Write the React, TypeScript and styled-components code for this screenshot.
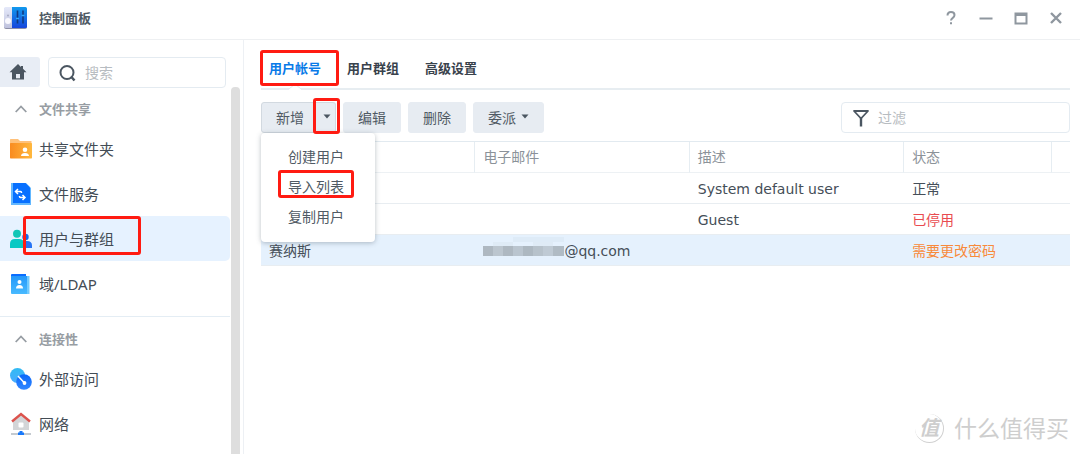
import React from 'react';
import styled, { createGlobalStyle, css } from 'styled-components';

const GlobalStyle = createGlobalStyle`
  * { box-sizing: border-box; }
  body {
    margin: 0;
    background: #fff;
    color: #414b55;
    font-family: "Noto Sans", "Noto Sans CJK SC", sans-serif;
    font-size: 14px;
    overflow: hidden;
  }
  button, input { font: inherit; color: inherit; }
`;

const Window = styled.div`
  position: relative;
  display: flex;
  flex-direction: column;
  height: 100vh;
`;

const TitleBar = styled.header`
  display: flex;
  align-items: center;
  flex: none;
  height: 40px;
  padding: 0 16px 3px 3px;
  border-bottom: 1px solid #eef0f2;
`;

const Title = styled.h1`
  flex: 1;
  margin: 0 0 0 11px;
  font-size: 13px;
  line-height: 20px;
  font-weight: 700;
  color: #505b65;
`;

const WindowButtons = styled.div`
  display: flex;
  gap: 19px;
`;

const WindowButton = styled.button`
  display: flex;
  padding: 0;
  border: 0;
  background: none;
  color: #8f979f;
`;

const Body = styled.div`
  display: flex;
  flex: 1;
  min-height: 0;
`;

const Sidebar = styled.aside`
  display: flex;
  flex-direction: column;
  flex: none;
  width: 244px;
  padding-top: 17px;
  border-right: 1px solid #edf0f4;
`;

const SidebarTop = styled.div`
  display: flex;
  gap: 8px;
  padding-right: 17px;
`;

const HomeButton = styled.button`
  display: flex;
  align-items: center;
  justify-content: center;
  width: 40px;
  height: 30px;
  padding: 0 4px 0 0;
  border: 0;
  border-radius: 0 3px 3px 0;
  background: #e8edf5;
`;

const Field = styled.label<{ $width?: number }>`
  display: flex;
  align-items: center;
  gap: 8px;
  height: 31px;
  padding: 0 10px;
  border: 1px solid #e4ebf1;
  border-radius: 4px;
  ${(p) => (p.$width ? css`width: ${p.$width}px;` : css`flex: 1; min-width: 0;`)}

  svg { flex: none; }
`;

const FieldInput = styled.input`
  flex: 1;
  min-width: 0;
  padding: 0;
  border: 0;
  outline: 0;
  background: none;
  &::placeholder { color: #b7bcc1; opacity: 1; }
`;

const NavScroll = styled.div`
  display: flex;
  flex: 1;
  min-height: 0;
  margin-top: -1px;
`;

const Nav = styled.nav`
  flex: 1;
  overflow: hidden;
`;

const Scrollbar = styled.div`
  width: 9px;
  margin: 0 3px 0 1px;
  border-radius: 4px 4px 0 0;
  background: #dedede;
`;

const NavGroup = styled.section`
  & + & {
    margin-top: 10px;
    border-top: 1px solid #e4edf4;
  }
`;

const GroupToggle = styled.button`
  display: flex;
  align-items: center;
  gap: 12px;
  width: 100%;
  height: 39px;
  padding: 4px 0 0 15px;
  border: 0;
  background: none;
  font-size: 13px;
  font-weight: 700;
  color: #979da3;
`;

const NavItem = styled.a<{ $active?: boolean }>`
  position: relative;
  display: flex;
  align-items: center;
  gap: 7px;
  height: 45px;
  padding-left: 10px;
  border-radius: 0 5px 5px 0;
  background: ${(p) => (p.$active ? '#e6f2ff' : 'transparent')};
  color: #434c55;
  font-size: 15px;
  text-decoration: none;
`;

const Main = styled.main`
  flex: 1;
  min-width: 0;
  padding: 10px 10px 0 17px;
`;

const Tabs = styled.div`
  display: flex;
  gap: 26px;
  height: 40px;
  padding-left: 8px;
  border-bottom: 2px solid #e7edf1;
`;

const Tab = styled.button<{ $active?: boolean }>`
  position: relative;
  height: 38px;
  padding: 0 0 3px;
  border: 0;
  background: none;
  font-size: 13px;
  font-weight: 700;
  color: ${(p) => (p.$active ? '#087ae8' : '#39424c')};
`;

const Notch = styled.svg`
  position: absolute;
  bottom: -2px;
  left: 50%;
  margin-left: -6px;
`;

const Toolbar = styled.div`
  display: flex;
  gap: 7px;
  margin: 12px 0 8px;

  ${Field} { margin-left: auto; }
`;

const buttonFace = css`
  height: 31px;
  border: 1px solid #e7ecf2;
  background: #e7ecf2;
  color: #505a64;
`;

const ToolButton = styled.button`
  ${buttonFace}
  display: flex;
  align-items: center;
  gap: 5px;
  padding: 0 14px 2px;
  border-radius: 3px;
`;

const SplitButton = styled.div`
  position: relative;
  display: flex;
`;

const SplitMain = styled.button`
  ${buttonFace}
  width: 53px;
  padding: 0 0 2px 5px;
  border-color: #d2d9e0;
  border-radius: 3px 0 0 3px;
`;

const SplitArrow = styled.button`
  ${buttonFace}
  display: flex;
  align-items: center;
  justify-content: center;
  width: 22px;
  padding: 0 0 2px 4px;
  border-color: #d2d9e0;
  border-left: 0;
  border-radius: 0 3px 3px 0;
`;

const Menu = styled.div`
  position: absolute;
  z-index: 1;
  top: 31px;
  left: 0;
  width: 114px;
  padding: 9px 0 10px;
  border-radius: 4px;
  background: #fff;
  box-shadow: 0 1px 5px rgba(60, 75, 90, 0.35);
`;

const MenuItem = styled.button`
  position: relative;
  display: block;
  width: 100%;
  height: 30px;
  padding: 0 0 2px 27px;
  border: 0;
  background: none;
  text-align: left;
  color: #505a64;
`;

const Mark = styled.span<{ $box: [number, number, number, number] }>`
  position: absolute;
  z-index: 2;
  top: ${(p) => p.$box[0]}px;
  left: ${(p) => p.$box[1]}px;
  width: ${(p) => p.$box[2]}px;
  height: ${(p) => p.$box[3]}px;
  border: 3px solid #ff1b12;
  border-radius: 3px;
  pointer-events: none;
`;

const Table = styled.table`
  width: 100%;
  table-layout: fixed;
  border-collapse: separate;
  border-spacing: 0;
  border-top: 1px solid #e2eaf0;
  font-family: "DejaVu Sans", "Noto Sans CJK SC", sans-serif;
`;

const HeadCell = styled.th`
  height: 31px;
  padding: 0 8px;
  border-right: 1px solid #e6edf2;
  border-bottom: 1px solid #edf1f4;
  font-weight: 400;
  line-height: 20px;
  text-align: left;
  color: #8b9299;
  &:last-child { border-right: 0; }
`;

const Row = styled.tr<{ $selected?: boolean }>`
  background: ${(p) => (p.$selected ? '#e5f1fd' : 'transparent')};
`;

type Tone = 'normal' | 'disabled' | 'warning';
const tones: Record<Tone, string> = { normal: '#454e58', disabled: '#e94b50', warning: '#f88a3b' };

const Cell = styled.td<{ $tone?: Tone }>`
  height: 31px;
  padding: 2px 8px 0;
  border-bottom: 1px solid #e8edf1;
  line-height: 20px;
  white-space: nowrap;
  color: ${(p) => tones[p.$tone ?? 'normal']};
`;

const Email = styled.span`
  display: flex;
  align-items: center;
`;

const Watermark = styled.div`
  position: absolute;
  right: 11px;
  bottom: 9px;
  display: flex;
  align-items: center;
  gap: 10px;
  color: #cecece;
  font-size: 23px;
  line-height: 34px;
  text-shadow: -1px -1px 0 #fff;
`;

const Seal = styled.span`
  display: flex;
  align-items: center;
  justify-content: center;
  width: 29px;
  height: 29px;
  border-right: 1px solid #d0d0d0;
  border-bottom: 1px solid #d0d0d0;
  border-radius: 50%;
  font-size: 20px;
  font-style: italic;
  font-weight: 700;
  text-shadow: none;
`;

const AppIcon = () => (
  <svg width="25" height="24" viewBox="0 0 25 24">
    <defs>
      <linearGradient id="panelBlue" x1="0" y1="0" x2="0" y2="1"><stop stopColor="#1199ed" /><stop offset="1" stopColor="#1746dc" /></linearGradient>
      <linearGradient id="panelGrey" x1="0" y1="0" x2="0" y2="1"><stop stopColor="#e5e9fa" /><stop offset="1" stopColor="#bfc2dd" /></linearGradient>
    </defs>
    <rect x="1" y="2" width="23" height="21" rx="2" fill="#8d8fa7" />
    <path d="M2.500 1H9v21H2.500Q1 22 1 20.500V2.500Q1 1 2.500 1z" fill="url(#panelGrey)" />
    <path d="M9 1h13.500Q24 1 24 2.500v18q0 1.500-1.500 1.500H9z" fill="url(#panelBlue)" />
    <circle cx="5" cy="15" r="3" fill="#f8f8fe" />
    <circle cx="5" cy="9.500" r="1" fill="#a8abc2" />
    <path d="M14.500 4.500v13M20 4.500v13" stroke="#123a80" strokeWidth="1.600" />
    <path d="M13 12.500h3M18.500 9.500h3" stroke="#2fa8fb" strokeWidth="1.600" />
  </svg>
);

const HomeIcon = () => (
  <svg width="18" height="16" viewBox="0 0 18 16">
    <path d="M9 0 0.500 8.200H3V15.500h4V10h4v5.500H15V8.200h2.500L14 4.800V2h-2v1z" fill="#4b5661" />
    <path d="M7 14.300h4v1.200H7z" fill="#4b5661" />
  </svg>
);

const SearchIcon = () => (
  <svg width="18" height="18" viewBox="0 0 18 18" fill="none" stroke="#4b5661" strokeWidth="2">
    <circle cx="8" cy="8.500" r="6.500" /><path d="m12 12.500 3.500 4" strokeWidth="2.500" />
  </svg>
);

const FilterIcon = () => (
  <svg width="18" height="18" viewBox="0 0 18 18" fill="none" stroke="#4b5661">
    <path d="M2 2h14L9 9.500z" strokeWidth="1.800" strokeLinejoin="round" />
    <path d="M9 9v8.500" strokeWidth="2.400" />
  </svg>
);

const Chevron = () => (
  <svg width="12" height="8" viewBox="0 0 12 8" fill="none" stroke="#979da3" strokeWidth="1.800"><path d="m.7 7 5.300-5.500L11.300 7" /></svg>
);

const Caret = () => (
  <svg width="8" height="5" viewBox="0 0 8 5"><path d="M.5.500h7L4 4.500z" fill="#4b5661" /></svg>
);

const ShareIcon = () => (
  <svg width="22" height="22" viewBox="0 0 22 22">
    <defs><linearGradient id="folder"><stop stopColor="#f98b20" /><stop offset="1" stopColor="#ffb83e" /></linearGradient></defs>
    <path d="M0 1.500Q0 1 .7 1H8l2 2h11.500v6H0z" fill="#ffc17a" />
    <rect y="5" width="22" height="15.500" rx=".7" fill="url(#folder)" />
    <circle cx="15" cy="11.800" r="2.300" fill="#fff" /><path d="M11 18q.2-3 4-3t4 3z" fill="#fff" />
  </svg>
);

const FileIcon = () => (
  <svg width="22" height="22" viewBox="0 0 22 22">
    <path d="M1 0h15l5 5v17H1z" fill="#62b7ff" /><path d="M3 0h12.500L20 4.500V20H3z" fill="#0870ff" />
    <path d="M8 6 5.500 8.500 8 11M6 8.500h4.500q1 0 1 1V10M12.500 12l2.500 2.500-2.500 2.500M14.500 14.500H10.500q-1 0-1-1V13" fill="none" stroke="#fff" strokeWidth="1.500" />
  </svg>
);

const UsersIcon = () => (
  <svg width="22" height="20" viewBox="0 0 22 20">
    <circle cx="15.500" cy="8" r="3.200" fill="#176bea" /><path d="M11 19v-4q0-3 4-3h2q5 0 5 4.500V19z" fill="#2674f5" />
    <circle cx="7" cy="4.800" r="4" fill="#13c6b6" /><path d="M0 19v-4q0-5 5-5h4q5 0 5 5v4z" fill="#08c9c4" />
  </svg>
);

const DomainIcon = () => (
  <svg width="22" height="22" viewBox="0 0 22 22">
    <defs><linearGradient id="book" x1="0" y1="0" x2="0" y2="1"><stop stopColor="#2498fa" /><stop offset="1" stopColor="#48baff" /></linearGradient></defs>
    <path d="M1 2Q1 1 2 1h14v3H1z" fill="#0a6dff" /><path d="M1 3h17.500v18H2q-1 0-1-1z" fill="url(#book)" /><path d="M17 3h2.500v18H17z" fill="#71caff" />
    <circle cx="9.500" cy="9" r="2" fill="#fff" /><path d="M6 15.500q0-3.500 3.500-3.500t3.500 3.500z" fill="#fff" />
  </svg>
);

const AccessIcon = () => (
  <svg width="22" height="22" viewBox="0 0 22 22">
    <defs>
      <linearGradient id="sky" x1="0" y1="0" x2="0" y2="1"><stop stopColor="#31bbf3" /><stop offset="1" stopColor="#49aaff" /></linearGradient>
      <linearGradient id="deep" x1="0" y1="0" x2="0" y2="1"><stop stopColor="#0867fa" /><stop offset="1" stopColor="#3488ff" /></linearGradient>
    </defs>
    <circle cx="7.500" cy="7.500" r="7.500" fill="url(#sky)" /><circle cx="14" cy="14" r="7.800" fill="url(#deep)" />
    <path d="m8 8 6 6.500" stroke="#fff" strokeWidth="1.500" /><circle cx="14.500" cy="15" r="1.900" fill="#fff" />
  </svg>
);

const NetworkIcon = () => (
  <svg width="22" height="24" viewBox="0 0 22 24">
    <path d="M3 8.500 11 2l8 6.500V18H3z" fill="#d3d5d7" /><path d="M2 9.500 11 2l9 7.500" fill="none" stroke="#dc534d" strokeWidth="2.300" />
    <rect x="8.500" y="10.500" width="5" height="5" rx="1" fill="#fff" /><path d="M1 22h20" stroke="#c4cad0" strokeWidth="2" />
    <path d="M9.500 19h3v1.500H14V23H8v-2.500h1.500z" fill="#1778fa" />
  </svg>
);

const mosaic = ['#aeb8c1', '#bcc6cf', '#aeb8c1', '#bac5cf', '#adb8c1', '#b7c2cb', '#bfcad4', '#b0bbc4'];
const MaskedName = () => (
  <svg width="81" height="28" viewBox="0 2 81 28">
    <path d="M30 2h51v5H30z" fill="#deebf7" />
    {mosaic.map((c, i) => <rect key={c + i} x={i * 10} y="11" width={i === 7 ? 11 : 10} height="10" fill={c} />)}
    <path d="M10 7h20v4H10zM50 7h20v4H50z" fill="#dfebf6" />
  </svg>
);

const groups = [
  {
    title: '文件共享',
    items: [
      { label: '共享文件夹', icon: <ShareIcon /> },
      { label: '文件服务', icon: <FileIcon /> },
      { label: '用户与群组', icon: <UsersIcon />, active: true },
      { label: '域/LDAP', icon: <DomainIcon /> },
    ],
  },
  {
    title: '连接性',
    items: [
      { label: '外部访问', icon: <AccessIcon /> },
      { label: '网络', icon: <NetworkIcon /> },
    ],
  },
] as { title: string; items: { label: string; icon: React.ReactNode; active?: boolean }[] }[];

const windowIcons: [string, React.ReactNode][] = [
  ['帮助', <path d="M4.500 5.500Q4.500 2 8 2t3.500 3q0 1.700-1.700 2.800Q8 9 8 10.500M8 12.300v2" />],
  ['最小化', <path d="M1.500 8.500h13" />],
  ['最大化', <path d="M2.500 3.500h11v10h-11zM2 5h12" />],
  ['关闭', <path d="m3 3 10 10M13 3 3 13" strokeWidth="2.400" />],
];

export default function App() {
  return (
    <Window>
      <GlobalStyle />
      <TitleBar>
        <AppIcon />
        <Title>控制面板</Title>
        <WindowButtons>
          {windowIcons.map(([label, shape]) => (
            <WindowButton key={label} aria-label={label}>
              <svg width="16" height="16" viewBox="0 0 16 16" fill="none" stroke="currentColor" strokeWidth="2">{shape}</svg>
            </WindowButton>
          ))}
        </WindowButtons>
      </TitleBar>
      <Body>
        <Sidebar>
          <SidebarTop>
            <HomeButton aria-label="主页"><HomeIcon /></HomeButton>
            <Field><SearchIcon /><FieldInput aria-label="搜索" placeholder="搜索" /></Field>
          </SidebarTop>
          <NavScroll>
            <Nav>
              {groups.map((group) => (
                <NavGroup key={group.title}>
                  <GroupToggle aria-expanded="true"><Chevron />{group.title}</GroupToggle>
                  {group.items.map((item) => (
                    <NavItem key={item.label} href="#" $active={item.active}>
                      {item.icon}{item.label}
                      {item.active && <Mark $box={[0, 23, 118, 39]} />}
                    </NavItem>
                  ))}
                </NavGroup>
              ))}
            </Nav>
            <Scrollbar />
          </NavScroll>
        </Sidebar>
        <Main>
          <Tabs role="tablist">
            <Tab role="tab" aria-selected="true" $active>
              用户帐号
              <Notch width="12" height="7" viewBox="0 0 12 7"><path d="M0 7V6L6 1l6 5v1z" fill="#fff" /><path d="M0 6 6 1l6 5" fill="none" stroke="#e4ebf0" /></Notch>
              <Mark $box={[0, -9, 79, 36]} />
            </Tab>
            <Tab role="tab" aria-selected="false">用户群组</Tab>
            <Tab role="tab" aria-selected="false">高级设置</Tab>
          </Tabs>
          <Toolbar>
            <SplitButton>
              <SplitMain>新增</SplitMain>
              <SplitArrow aria-label="更多新增方式" aria-expanded="true"><Caret /></SplitArrow>
              <Mark $box={[-4, 52, 27, 36]} />
              <Menu role="menu">
                <MenuItem role="menuitem">创建用户</MenuItem>
                <MenuItem role="menuitem">导入列表<Mark $box={[-2, 17, 76, 28]} /></MenuItem>
                <MenuItem role="menuitem">复制用户</MenuItem>
              </Menu>
            </SplitButton>
            <ToolButton>编辑</ToolButton>
            <ToolButton>删除</ToolButton>
            <ToolButton>委派<Caret /></ToolButton>
            <Field $width={229}><FilterIcon /><FieldInput aria-label="过滤" placeholder="过滤" /></Field>
          </Toolbar>
          <Table>
            <colgroup>
              <col width="26.5%" /><col width="26.5%" /><col width="26.5%" /><col width="18.3%" /><col />
            </colgroup>
            <thead>
              <tr>
                <HeadCell aria-label="名称" /><HeadCell>电子邮件</HeadCell><HeadCell>描述</HeadCell><HeadCell>状态</HeadCell><HeadCell />
              </tr>
            </thead>
            <tbody>
              <Row><Cell /><Cell /><Cell>System default user</Cell><Cell>正常</Cell><Cell /></Row>
              <Row><Cell /><Cell /><Cell>Guest</Cell><Cell $tone="disabled">已停用</Cell><Cell /></Row>
              <Row $selected>
                <Cell>赛纳斯</Cell><Cell><Email><MaskedName />@qq.com</Email></Cell><Cell /><Cell $tone="warning">需要更改密码</Cell><Cell />
              </Row>
            </tbody>
          </Table>
        </Main>
      </Body>
      <Watermark><Seal>值</Seal>什么值得买</Watermark>
    </Window>
  );
}
